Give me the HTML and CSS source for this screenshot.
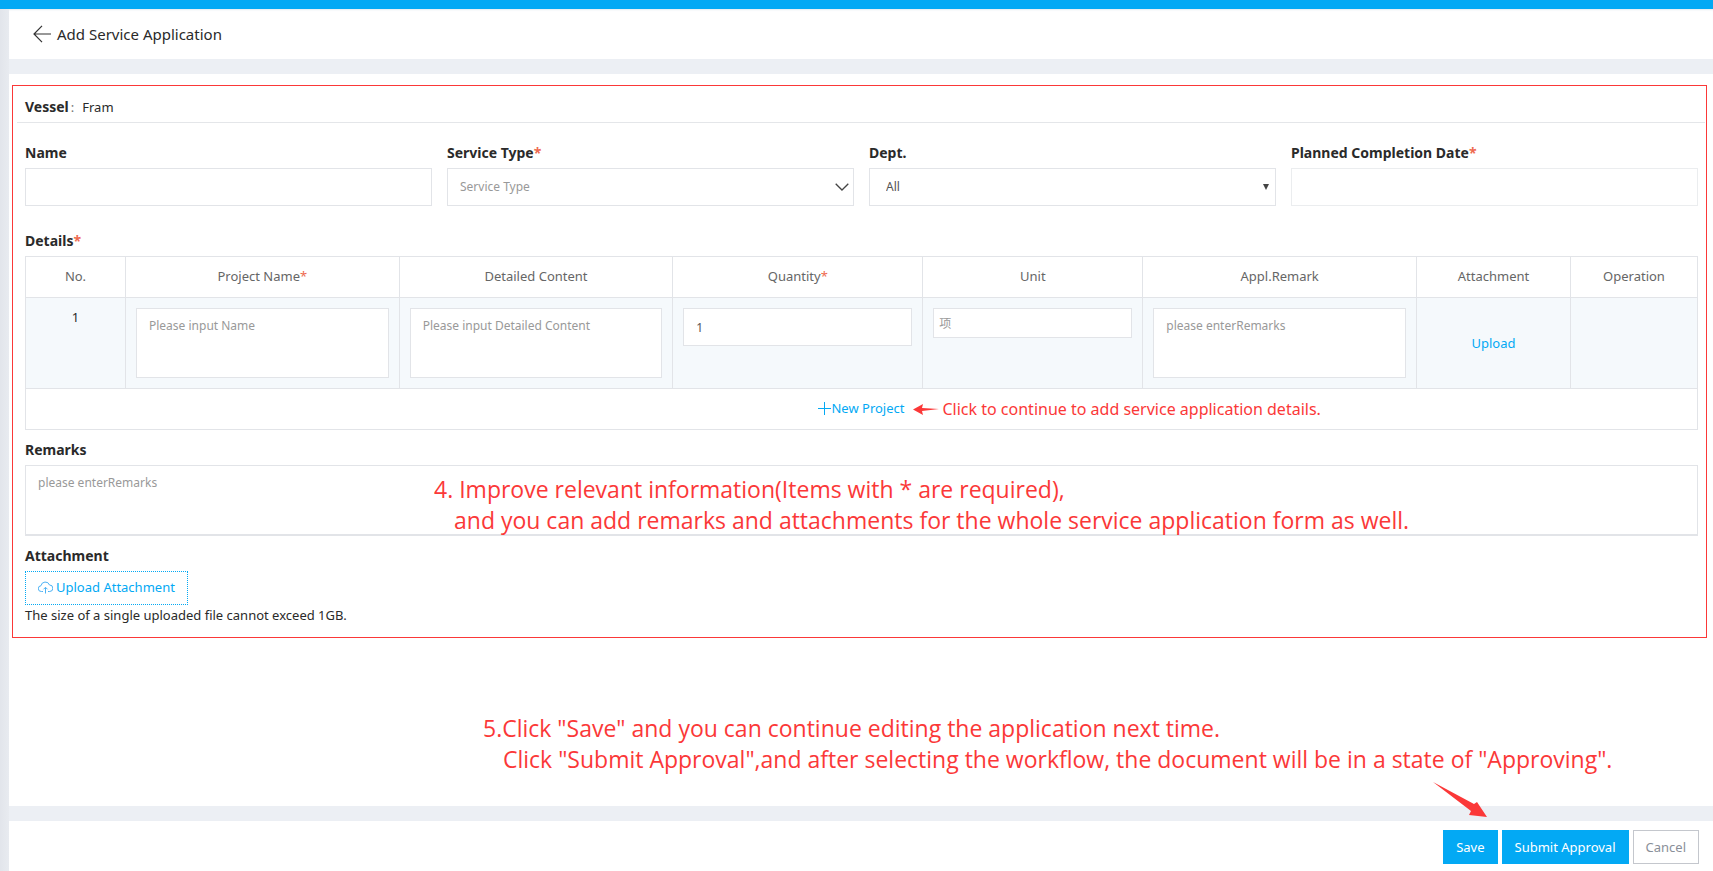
FILE: index.html
```html
<!DOCTYPE html>
<html lang="en">
<head>
<meta charset="utf-8">
<title>Add Service Application</title>
<link rel="stylesheet" href="styles.css">
</head>
<body>
<div class="topbar"></div>
<div class="shell">
  <header class="page-header">
    <a class="back" href="#" aria-label="Back">
      <svg width="18" height="18" viewBox="0 0 18 18" fill="none" stroke="#333" stroke-width="1.2"><path d="M9 .8 1 9l8 8.2M1 9h17"/></svg>
    </a>
    <h1 class="page-title">Add Service Application</h1>
  </header>

  <main class="panel">
    <form class="form-box">
      <div class="vessel"><b class="strong">Vessel</b><span class="colon">:</span><span>Fram</span></div>

      <div class="fields">
        <div class="field">
          <label class="label" for="name">Name</label>
          <input class="control" id="name" type="text">
        </div>
        <div class="field">
          <label class="label" for="type">Service Type<span class="req">*</span></label>
          <div class="select-wrap">
            <select class="control muted" id="type"><option>Service Type</option></select>
            <svg class="chevron" width="14" height="8" viewBox="0 0 14 8" fill="none" stroke="#444" stroke-width="1.3"><path d="M.7.7 7 7 13.3.7"/></svg>
          </div>
        </div>
        <div class="field">
          <label class="label" for="dept">Dept.</label>
          <div class="select-wrap">
            <select class="control indent" id="dept"><option>All</option></select>
            <svg class="triangle" width="6" height="6" viewBox="0 0 6 6" fill="#444"><path d="M0 0h6L3 6z"/></svg>
          </div>
        </div>
        <div class="field">
          <label class="label" for="date">Planned Completion Date<span class="req">*</span></label>
          <input class="control light" id="date" type="text">
        </div>
      </div>

      <div class="label">Details<span class="req">*</span></div>
      <table class="details">
        <colgroup><col class="c-no"><col><col><col class="c-qty"><col class="c-unit"><col><col class="c-att"><col class="c-op"></colgroup>
        <thead>
          <tr>
            <th>No.</th><th>Project Name<span class="req">*</span></th><th>Detailed Content</th><th>Quantity<span class="req">*</span></th><th>Unit</th><th>Appl.Remark</th><th>Attachment</th><th>Operation</th>
          </tr>
        </thead>
        <tbody>
          <tr class="item">
            <td>1</td>
            <td><textarea class="control area" aria-label="Project Name" placeholder="Please input Name"></textarea></td>
            <td><textarea class="control area" aria-label="Detailed Content" placeholder="Please input Detailed Content"></textarea></td>
            <td><input class="control" type="text" aria-label="Quantity" value="1"></td>
            <td><input class="control small" type="text" aria-label="Unit" placeholder="项"></td>
            <td><textarea class="control area" aria-label="Appl.Remark" placeholder="please enterRemarks"></textarea></td>
            <td class="middle"><a class="link" href="#">Upload</a></td>
            <td></td>
          </tr>
          <tr>
            <td colspan="8">
              <span class="add-wrap">
                <button class="add" type="button"><svg width="13" height="13" viewBox="0 0 13 13" fill="none" stroke="#03a9f4"><path d="M6.500 0v13M0 6.500h13"/></svg>New Project</button>
                <span class="note note-add">
                  <svg width="26" height="11" viewBox="0 0 26 11" fill="#fb3838"><path d="M0 5.500 10 0 9 4l17 1-17 2 1 4z"/></svg>
                  Click to continue to add service application details.
                </span>
              </span>
            </td>
          </tr>
        </tbody>
      </table>

      <div class="remarks">
        <label class="label" for="remarks">Remarks</label>
        <textarea class="control area wide" id="remarks" placeholder="please enterRemarks"></textarea>
        <p class="note note-large note-form">4. Improve relevant information(Items with * are required),<br><span class="continued">and you can add remarks and attachments for the whole service application form as well.</span></p>
      </div>

      <div class="label">Attachment</div>
      <button class="upload" type="button">
        <svg width="15" height="13" viewBox="0 0 15 13" fill="none" stroke="#4db2f4"><path d="M5 10.500H3.500A2.900 2.900 0 0 1 3 4.700 4.400 4.400 0 0 1 11.500 4a3.200 3.200 0 0 1 .2 6.500H10M7.500 12.500v-6M5.500 8.300l2-2 2 2"/></svg>
        Upload Attachment
      </button>
      <p class="hint">The size of a single uploaded file cannot exceed 1GB.</p>
    </form>

    <p class="note note-large note-save">5.Click "Save" and you can continue editing the application next time.<br><span class="continued">Click "Submit Approval",and after selecting the workflow, the document will be in a state of "Approving".</span></p>
    <svg class="pointer" width="54" height="35" viewBox="0 0 54 35" fill="#fb3838"><path d="M0 0 41 22 44 20 54 35 36 33 38 29z"/></svg>
  </main>

  <footer class="actions">
    <button class="btn primary" type="button">Save</button>
    <button class="btn primary" type="button">Submit Approval</button>
    <button class="btn" type="button">Cancel</button>
  </footer>
</div>
</body>
</html>
```
FILE: styles.css
```css
* { box-sizing: border-box; }

body {
  margin: 0;
  min-height: 100vh;
  display: flex;
  flex-direction: column;
  background: #eceff4;
  color: #2a2a2a;
  font: 13px/20px "Noto Sans", "Noto Sans CJK SC", sans-serif;
}

input, select, textarea, button { font: inherit; }
p, h1 { margin: 0; }
a { text-decoration: none; }

.topbar {
  height: 9px;
  background: #03a9f4;
}

.shell {
  flex: 1;
  display: flex;
  flex-direction: column;
  gap: 15px;
  padding-left: 9px;
  background: linear-gradient(to right, #e2e5eb, #e8ebf0 9px, #eceff4 9px);
}

.page-header {
  display: flex;
  align-items: center;
  gap: 6px;
  height: 50px;
  padding: 0 24px;
  background: #fff;
  box-shadow: inset 0 2px 2px -1px #e4ebf0;
}

.back { display: flex; }

.page-title {
  font-size: 15px;
  font-weight: 400;
}

.panel {
  position: relative;
  flex: 1;
  padding: 11px 6px 0 3px;
  background: #fff;
}

.form-box {
  border: 1px solid #fb3838;
  padding: 0 8px 12px 12px;
}

.vessel {
  display: flex;
  margin: 0 -7px 0 -8px;
  padding: 11px 8px 5px;
  border-bottom: 1px solid #e4e6e9;
}

.strong { font-size: 14px; }

.colon {
  margin: 0 8px 0 2px;
  color: #777;
}

.fields {
  display: grid;
  grid-template-columns: repeat(4, 1fr);
  gap: 15px;
  margin: 20px 0 25px;
}

.label {
  display: block;
  padding-bottom: 5px;
  font-size: 14px;
  font-weight: 700;
  line-height: 20px;
}

.req { color: #ee6a50; }

.control {
  display: block;
  width: 100%;
  height: 38px;
  padding: 0 12px;
  border: 1px solid #e2e4e8;
  border-radius: 0;
  background: #fff;
  color: #555;
  font-size: 12px;
  outline: 0;
  appearance: none;
}

.control::placeholder { color: #999; }
.muted { color: #999; }
.indent { padding-left: 16px; }
.light { border-color: #ebedef; }

.area {
  height: 70px;
  padding-top: 7px;
  line-height: 20px;
  resize: none;
}

.wide {
  height: 71px;
  border-bottom-width: 2px;
}

.small {
  height: 30px;
  padding: 0 5px;
}

.select-wrap {
  display: grid;
  align-items: center;
}

.select-wrap > * { grid-area: 1 / 1; }

.chevron, .triangle {
  justify-self: end;
  pointer-events: none;
}

.chevron { margin-right: 5px; }
.triangle { margin-right: 7px; }

.details {
  width: 100%;
  table-layout: fixed;
  border-collapse: collapse;
  line-height: 18px;
}

.c-no { width: 100px; }
.c-qty { width: 250px; }
.c-unit { width: 220px; }
.c-att { width: 154px; }
.c-op { width: 127px; }

.details th, .details td {
  padding: 10px;
  border: 1px solid #e2e4e8;
  text-align: center;
  vertical-align: top;
}

.details th {
  padding-bottom: 12px;
  color: #666;
  font-weight: 400;
}

.item { background: #f5f9fc; }
.details .middle { vertical-align: middle; }

.link, .add, .upload { color: #03a9f4; }

.add-wrap {
  position: relative;
  display: inline-flex;
  height: 20px;
  vertical-align: top;
}

.add {
  display: flex;
  align-items: center;
  padding: 0 0 2px;
  border: 0;
  background: none;
}

.note { color: #fb3838; }

.note-add {
  position: absolute;
  top: 1px;
  left: 100%;
  display: flex;
  align-items: center;
  gap: 4px;
  padding-left: 8px;
  font-size: 16px;
  white-space: nowrap;
}

.note-large {
  font-family: "Open Sans", sans-serif;
  font-size: 23px;
  line-height: 31px;
}

.remarks {
  position: relative;
  margin: 10px 0;
}

.note-form {
  position: absolute;
  top: 34px;
  left: 409px;
  pointer-events: none;
}

.continued { padding-left: 20px; }

.upload {
  display: flex;
  align-items: center;
  gap: 3px;
  height: 34px;
  padding: 0 12px 2px;
  border: 1px dotted #03a9f4;
  background: #fff;
}

.note-save { padding: 75px 0 0 471px; }

.pointer {
  position: absolute;
  right: 226px;
  bottom: -11px;
}

.actions {
  display: flex;
  justify-content: flex-end;
  align-items: center;
  gap: 4px;
  height: 50px;
  padding: 2px 14px 0 0;
  background: #fff;
}

.btn {
  height: 34px;
  padding: 0 12px 1px;
  border: 1px solid #c4c7cd;
  background: #fff;
  color: #8a8f99;
}

.primary {
  border-color: #03a9f4;
  background: #03a9f4;
  color: #fff;
}
```
